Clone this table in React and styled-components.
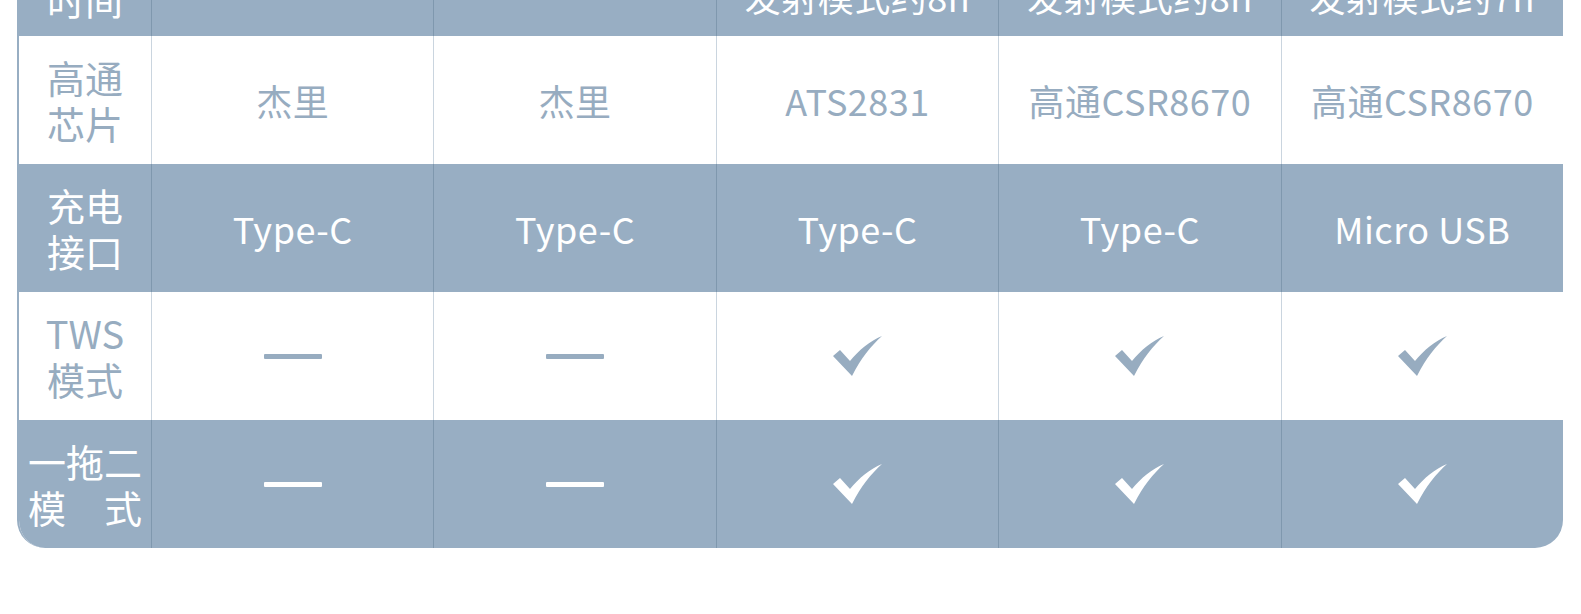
import React from 'react';
import styled, { createGlobalStyle, css } from 'styled-components';

const BLUE = '#98aec3';
const INK = '#97acc0';

const GlobalStyle = createGlobalStyle`
  html, body {
    margin: 0;
    padding: 0;
    background: #ffffff;
  }
  body {
    font-family: "Noto Sans CJK SC", "Noto Sans", sans-serif;
    overflow: hidden;
  }
`

const Page = styled.div`
  width: 1581px;
  height: 614px;
  padding-left: 17px;
  box-sizing: border-box;
  overflow: hidden;
`

const Table = styled.div`
  width: 1546px;
  margin-top: -92px;
  border-left: 2px solid ${BLUE};
  border-radius: 0 0 28px 28px;
  overflow: hidden;
  box-sizing: border-box;
`

const Row = styled.div`
  display: grid;
  grid-template-columns: 132px repeat(5, 1fr);
  height: 128px;
  background: ${p => (p.$blue ? BLUE : '#ffffff')};
  color: ${p => (p.$blue ? '#ffffff' : INK)};
`

const Cell = styled.div`
  display: flex;
  align-items: center;
  justify-content: center;
  text-align: center;
  font-size: 36px;
  letter-spacing: 0.5px;
  border-left: 1px solid ${p => (p.$blue ? '#7f98ae' : '#cad5df')};
  ${p => p.$head && css`
    align-items: flex-end;
    padding-bottom: 17px;
    line-height: 46px;
  `}
`

const Label = styled.div`
  display: flex;
  align-items: center;
  justify-content: center;
  text-align: center;
  font-size: 38px;
  line-height: 46px;
  white-space: pre-line;
  ${p => p.$head && css`
    align-items: flex-end;
    padding-bottom: 14px;
  `}
`

const Dash = styled.span`
  display: block;
  width: 58px;
  height: 5px;
  border-radius: 1px;
  background: currentColor;
`

const Check = () => (
  <svg width="49" height="40" viewBox="0 0 49 40">
    <path
      d="M0 20 L7 14 L17 25 C26 14 37 5 49 0 C38 10 28 22 19 40 Z"
      fill="currentColor"
    />
  </svg>
)

const mark = v => (v === 'yes' ? <Check /> : v === 'no' ? <Dash /> : v)

const rows = [
  { label: '高通\n芯片', values: ['杰里', '杰里', 'ATS2831', '高通CSR8670', '高通CSR8670'] },
  { label: '充电\n接口', blue: true, values: ['Type-C', 'Type-C', 'Type-C', 'Type-C', 'Micro USB'] },
  { label: 'TWS\n模式', values: ['no', 'no', 'yes', 'yes', 'yes'] },
  { label: '一拖二\n模　式', blue: true, values: ['no', 'no', 'yes', 'yes', 'yes'] },
]

const head = ['', '', '发射模式约8h', '发射模式约8h', '发射模式约7h']

const App = () => {
  return (
    <Page>
      <GlobalStyle />
      <Table>
        <Row $blue>
          <Label $head>时间</Label>
          {head.map((h, i) => (
            <Cell key={i} $blue $head>{h}</Cell>
          ))}
        </Row>
        {rows.map(r => (
          <Row key={r.label} $blue={r.blue}>
            <Label>{r.label}</Label>
            {r.values.map((v, i) => (
              <Cell key={i} $blue={r.blue}>{mark(v)}</Cell>
            ))}
          </Row>
        ))}
      </Table>
    </Page>
  )
}

export default App;
